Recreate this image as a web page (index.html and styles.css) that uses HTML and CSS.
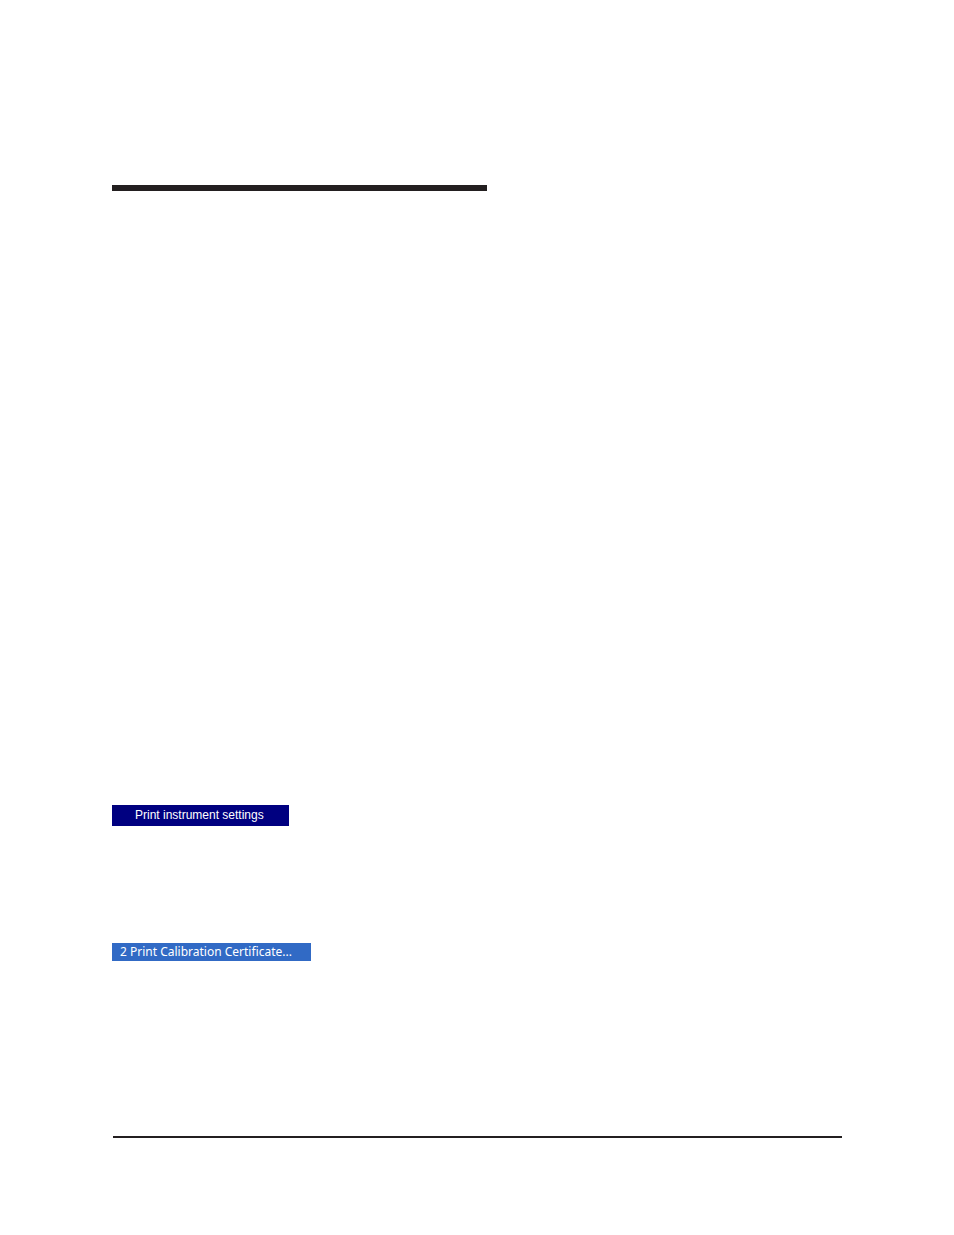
FILE: index.html
```html
<!DOCTYPE html>
<html lang="en">
  <head>
    <meta charset="UTF-8" />
    <meta name="viewport" content="width=device-width, initial-scale=1.0" />
    <title>Print Commands</title>
    <link rel="stylesheet" href="styles.css">
  </head>
  <body>
    <main class="page">
      <hr class="heading-rule" />
      <section class="commands">
        <button type="button" class="command settings">Print instrument settings</button>
        <button type="button" class="command certificate">2 Print Calibration Certificate...</button>
      </section>
      <hr class="footer-rule" />
    </main>
  </body>
</html>
```

FILE: styles.css
```css
body {
  margin: 0;
  background-color: #ffffff;
}

.page {
  padding: 185px 112px 96px;
}

/* Rules */
.heading-rule {
  width: 375px;
  max-width: 100%;
  height: 6px;
  margin: 0;
  border: none;
  background-color: #231f20;
}

.footer-rule {
  height: 2px;
  margin: 175px 0 0 1px;
  border: none;
  background-color: #231f20;
}

/* Menu commands */
.commands {
  display: flex;
  flex-direction: column;
  align-items: flex-start;
  gap: 117px;
  margin-top: 614px;
}

.command {
  border: none;
  color: #ffffff;
  text-align: left;
  white-space: nowrap;
}

.settings {
  min-width: 177px;
  padding: 0 23px;
  font: 12px/21px "Liberation Sans", Arial, sans-serif;
  background-color: #000080;
}

.certificate {
  min-width: 199px;
  padding: 0 8px;
  font: 12px/18px "Noto Sans", Tahoma, sans-serif;
  background-color: #316ac5;
}
```
